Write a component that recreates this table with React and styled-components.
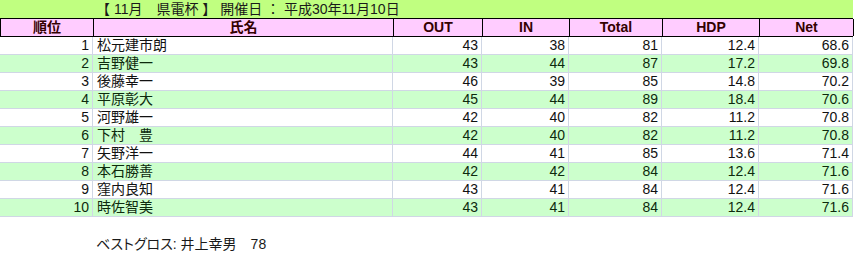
import React from 'react';
import styled, { createGlobalStyle } from 'styled-components';

const GlobalStyle = createGlobalStyle`
  html, body {
    margin: 0;
    padding: 0;
    background: #ffffff;
  }
  body {
    font-family: "Liberation Sans", "Noto Sans CJK JP", sans-serif;
    color: #000;
  }
`;

const COLS = '93px 300px 89px 87px 93px 97px 94px';

const Sheet = styled.div`
  width: 853px;
  display: flex;
  flex-direction: column;
`;

const TitleBar = styled.div`
  height: 18px;
  background: #c0ff80;
  padding-left: 96px;
  font-size: 14px;
  line-height: 18px;
  color: #1a1a1a;
  white-space: pre;
`;

const Row = styled.div`
  display: grid;
  grid-template-columns: ${COLS};
  height: 18px;
  box-sizing: border-box;
  background: ${p => (p.$alt ? '#ccffcc' : '#ffffff')};
  border-bottom: 1px solid #d0d7e5;
`;

const HeadRow = styled.div`
  display: grid;
  grid-template-columns: ${COLS};
  height: 19px;
  box-sizing: border-box;
  background: #ffccff;
  border-top: 1px solid #000;
  border-bottom: 1px solid #000;
  border-left: 1px solid #000;
`;

const HeadCell = styled.div`
  box-sizing: border-box;
  border-right: 1px solid #000;
  text-align: center;
  font-weight: 700;
  font-size: 14px;
  line-height: 17px;
  color: #330000;
`;

const Cell = styled.div`
  box-sizing: border-box;
  border-right: 1px solid #d0d7e5;
  font-size: 14px;
  line-height: 17px;
  padding: 0 ${p => (p.$left ? '0' : '3px')} 0 ${p => (p.$left ? '4px' : '0')};
  text-align: ${p => (p.$left ? 'left' : 'right')};
  color: ${p => (p.$alt ? '#0d2a0d' : '#111')};
  white-space: pre;
`;

const Footer = styled.div`
  padding: 18px 0 0 96px;
  font-size: 14px;
  line-height: 18px;
  color: #1a1a1a;
  white-space: pre;
  font-feature-settings: "palt";
`;

const heads = ['順位', '氏名', 'OUT', 'IN', 'Total', 'HDP', 'Net'];

const rows = [
  [1, '松元建市朗', 43, 38, 81, '12.4', '68.6'],
  [2, '吉野健一', 43, 44, 87, '17.2', '69.8'],
  [3, '後藤幸一', 46, 39, 85, '14.8', '70.2'],
  [4, '平原彰大', 45, 44, 89, '18.4', '70.6'],
  [5, '河野雄一', 42, 40, 82, '11.2', '70.8'],
  [6, '下村　豊', 42, 40, 82, '11.2', '70.8'],
  [7, '矢野洋一', 44, 41, 85, '13.6', '71.4'],
  [8, '本石勝善', 42, 42, 84, '12.4', '71.6'],
  [9, '窪内良知', 43, 41, 84, '12.4', '71.6'],
  [10, '時佐智美', 43, 41, 84, '12.4', '71.6'],
];

export default function App() {
  return (
    <>
      <GlobalStyle />
      <Sheet>
        <TitleBar>{'【 11月　県電杯 】 開催日 ： 平成30年11月10日'}</TitleBar>
        <HeadRow>
          {heads.map(h => (
            <HeadCell key={h}>{h}</HeadCell>
          ))}
        </HeadRow>
        {rows.map((r, i) => {
          const alt = i % 2 === 1;
          return (
            <Row key={r[0]} $alt={alt}>
              {r.map((v, j) => (
                <Cell key={j} $alt={alt} $left={j === 1}>
                  {v}
                </Cell>
              ))}
            </Row>
          );
        })}
        <Footer>{'ベストグロス: 井上幸男　78'}</Footer>
      </Sheet>
    </>
  );
}
